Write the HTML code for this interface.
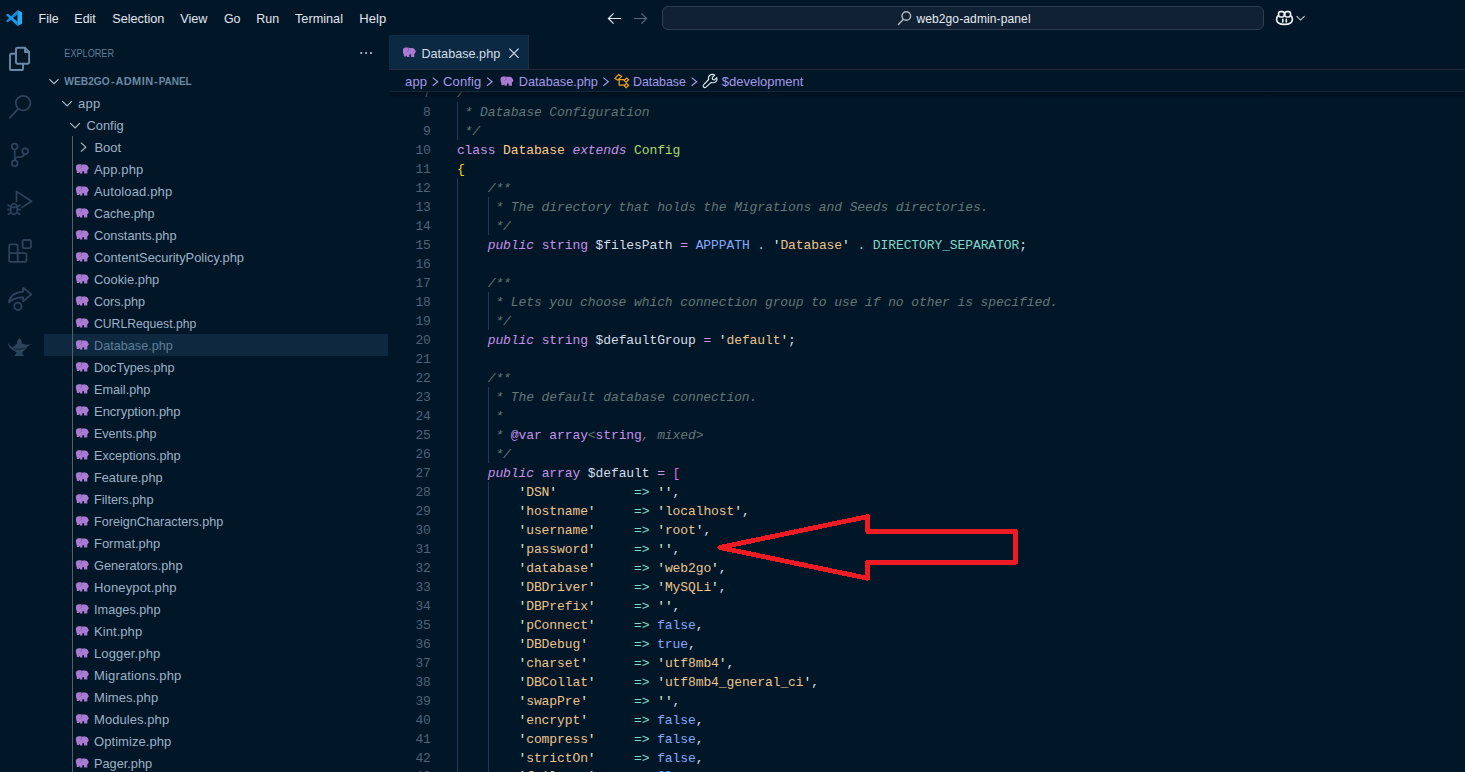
<!DOCTYPE html>
<html lang="en">
<head>
<meta charset="utf-8">
<title>Database.php - web2go-admin-panel - Visual Studio Code</title>
<style>
html,body{margin:0;padding:0;background:#011627;}
body{width:1465px;height:772px;overflow:hidden;position:relative;font-family:'Liberation Sans', sans-serif;}
.t{position:absolute;white-space:pre;transform-origin:0 50%;line-height:20px;height:20px;font-family:'Liberation Sans', sans-serif;}
svg{position:absolute;overflow:visible;}
#cc{position:absolute;left:662px;top:6px;width:600px;height:22px;border:1px solid #2c3e50;border-radius:6px;background:#0f2132;}
#tab{position:absolute;left:389px;top:35px;width:139px;height:35px;background:#0b2942;border-right:1px solid #272b3b;box-sizing:content-box;}
#tabline{position:absolute;left:389px;top:69px;width:1076px;height:1px;background:#262a39;}
#bcline{position:absolute;left:389px;top:91px;width:1076px;height:1px;background:#11283d;}
#eds{position:absolute;left:389px;top:92px;width:1076px;height:6px;background:linear-gradient(rgba(0,6,12,.45),rgba(0,6,12,0));}
#sel{position:absolute;left:44px;top:334px;width:344px;height:22px;background:#0e293f;}
#tg{position:absolute;left:72px;top:136px;width:1px;height:636px;background:#585f66;}
#ed{position:absolute;left:389px;top:92px;width:1076px;height:680px;overflow:hidden;}
.ln,.cl{position:absolute;height:19px;line-height:19px;font-family:'Liberation Mono', monospace;font-size:13px;letter-spacing:-0.1px;white-space:pre;}
.ln{left:0;width:41.8px;text-align:right;color:#4b6479;}
.cl{left:67.9px;color:#d6deeb;}
.g{position:absolute;width:1px;background:#1f385c;}
</style>
</head>
<body>
<div id="cc"></div>
<div id="tab"></div>
<div id="tabline"></div>
<div id="bcline"></div>
<div id="sel"></div>
<div id="tg"></div>
<svg width="1465" height="772" viewBox="0 0 1465 772" style="left:0;top:0" fill="none" stroke-linecap="round" stroke-linejoin="round">
<g stroke="none"><path d="M17.5,10.1 L21.5,12 Q22.1,12.3 22.1,12.9 V23.1 Q22.1,23.7 21.5,24 L17.5,25.9 Z" fill="#29a9f4"/><path d="M17.5,10.1 L6.5,20.5 Q6,21 6.5,21.4 L7.2,22 Q7.7,22.3 8.2,21.9 L17.5,14.4 Z" fill="#1787d6"/><path d="M17.5,25.9 L6.5,15.5 Q6,15 6.5,14.6 L7.2,14 Q7.7,13.7 8.2,14.1 L17.5,21.6 Z" fill="#1b99e6"/></g>
<g stroke="#6a8aa6" stroke-width="1.9"><path d="M17.6,47.8 H25.2 L29.1,51.8 V62 Q29.1,63.8 27.3,63.8 H17.6 Q16,63.8 16,62 V49.5 Q16,47.8 17.6,47.8 Z"/><path d="M25,48 V52 H29"/><path d="M16,53.8 H11.6 Q10,53.8 10,55.4 V68.4 Q10,70 11.6,70 H21.4 Q23,70 23,68.4 V63.8"/></g>
<g stroke="#2b445c" stroke-width="1.8"><circle cx="23.1" cy="103.1" r="7.3"/><path d="M17.8,109.3 L9.9,117.7"/></g>
<g stroke="#2b445c" stroke-width="1.7"><circle cx="14.7" cy="146.6" r="2.9"/><circle cx="25.2" cy="151.2" r="2.9"/><circle cx="14.7" cy="163.2" r="2.9"/><path d="M14.7,149.5 V160.3"/><path d="M24.6,154 Q23.6,157 20.5,157 H18 Q15.3,157 14.9,159.5"/></g>
<g stroke="#2b445c" stroke-width="1.7"><path d="M16.5,201.5 V191.4 L31.6,201.2 L21.6,207.6"/><ellipse cx="14" cy="209" rx="3.4" ry="5.4"/><path d="M10.8,207.3 H17.2"/><path d="M8.2,205.2 L10.6,206.6 M8,209.7 H10.5 M8.3,214.2 L10.7,212.6 M19.8,205.2 L17.4,206.6 M20,209.7 H17.5 M19.7,214.2 L17.3,212.6"/></g>
<g stroke="#2b445c" stroke-width="1.8"><rect x="22.6" y="240" width="8.3" height="8.2" rx="1.6"/><path d="M17.7,253.2 V246 Q17.7,244.4 16.1,244.4 H10.8 Q9.2,244.4 9.2,246 V260.3 Q9.2,261.9 10.8,261.9 H24.9 Q26.5,261.9 26.5,260.3 V254.8 Q26.5,253.2 24.9,253.2 H9.2 M17.7,253.2 V261.9"/></g>
<g stroke="#2b445c" stroke-width="1.8"><circle cx="17.9" cy="306.3" r="3.7"/><path d="M9,302.4 Q10.5,292.5 23.1,291.6 V287.6 L31.4,294.4 L23.1,301.2 V297.4 Q14,297.4 9,302.4 Z"/></g>
<g stroke="none" fill="#2b445c"><path d="M19.4,338 C20.3,339 21.6,340.4 21.7,341.6 L21.8,343.2 C23.5,343.8 25,344.6 26,344.8 C28,344.6 30,344.2 31.9,344 C29,345.2 27,347 25.5,349 C24.3,350.6 22.8,351.6 22.2,352.6 L22.4,354 L23.6,355 V356 H14.8 V355 L16.2,354 L16.4,352.6 C15,351 13,350.4 11.5,349.3 C9.5,347.8 8.2,345.8 8,343.6 C8.6,343.3 8.8,343.6 9,344 C9.8,346 11.6,347 13.4,347.2 C14.6,345.6 16,344 17.1,343.2 L17.1,341.6 C17.3,340.4 18.5,339 19.4,338 Z"/><path d="M14.2,348.9 Q19,350 24.6,348.2" stroke="#011627" stroke-width="0.7" fill="none"/></g>
<g stroke="#b4bec8" stroke-width="1.15" stroke-linecap="butt" stroke-linejoin="miter"><path d="M49.4,79.1 L54,83.6 L58.6,79.1"/><path d="M62.3,101.2 L67.1,105.9 L71.9,101.2"/><path d="M70.3,123.2 L75.1,127.9 L79.9,123.2"/><path d="M80.9,142.7 L85.8,147.2 L80.9,151.7"/></g>
<g fill="#c3cbd4" stroke="none"><circle cx="361.2" cy="53" r="1.05"/><circle cx="366.1" cy="53" r="1.05"/><circle cx="371" cy="53" r="1.05"/></g>
<g stroke="#e2e6f0" stroke-width="1.2" stroke-linecap="butt" stroke-linejoin="miter"><path d="M613.6,13.3 L608.4,18.5 L613.6,23.7 M608.6,18.5 H621"/></g>
<g stroke="#56677a" stroke-width="1.2" stroke-linecap="butt" stroke-linejoin="miter"><path d="M641.4,13.3 L646.6,18.5 L641.4,23.7 M634,18.5 H646.4"/></g>
<g stroke="#b0b8c3" stroke-width="1.45"><circle cx="906.3" cy="16" r="4.3"/><path d="M903.2,19.4 L898.4,24.5"/></g>
<g stroke="#f0f2f8" stroke-width="1.6"><rect x="1278.6" y="11.6" width="5.6" height="5.4" rx="2"/><rect x="1284.9" y="11.6" width="5.6" height="5.4" rx="2"/><path d="M1278.4,15.4 Q1276.6,16.8 1276.6,19.6 Q1276.8,24.3 1284.5,24.4 Q1292.2,24.3 1292.4,19.6 Q1292.4,16.8 1290.6,15.4"/><path d="M1282.8,19.3 V22 M1286.3,19.3 V22"/></g>
<g stroke="#c9d0da" stroke-width="1.1" stroke-linecap="butt" stroke-linejoin="miter"><path d="M1296.6,16.2 L1300.6,20.1 L1304.6,16.2"/></g>
<g stroke="#d6deeb" stroke-width="1.2" stroke-linecap="butt"><path d="M509.4,48.6 L518.6,57.8 M518.6,48.6 L509.4,57.8"/></g>
<g stroke="#a599e9" stroke-width="1.15" stroke-linecap="butt" stroke-linejoin="miter">
<path d="M432.7,77.6 L437.8,81.7 L432.7,85.8"/>
<path d="M487.0,77.6 L492.1,81.7 L487.0,85.8"/>
<path d="M603.3,77.6 L608.4,81.7 L603.3,85.8"/>
<path d="M691.6,77.6 L696.7,81.7 L691.6,85.8"/>
</g>
<g stroke="#ee9d28" stroke-width="1.25" stroke-linejoin="miter"><path d="M618.6,74.6 L621.6,76.4 L617.8,80.2 L614.9,78.4 Z" transform=""/><path d="M619.2,79.2 V85 H624.6 M619.2,79.6 H624.6"/><path d="M626.6,78 L628.6,79.8 L626.2,82.2 L624.2,80.4 Z"/><path d="M626.6,83.4 L628.6,85.2 L626.2,87.6 L624.2,85.8 Z"/></g>
<g stroke="#e6ebf3" stroke-width="1.2" transform="translate(710 81.2) scale(0.94) translate(-710 -81.2)"><path d="M715,74.6 L712.3,77.3 L712.6,79.4 L714.8,79.8 L717.2,77.3 C717.8,79.5 716.8,81.8 714.6,82.6 C713.4,83 712.3,82.9 711.3,82.5 L705.7,87.5 C704.9,88.1 703.7,88 703.1,87.2 C702.5,86.4 702.6,85.4 703.3,84.8 L708.6,79.4 C708.1,77.8 708.4,76 709.8,74.9 C711.4,73.7 713.4,73.7 715,74.6 Z"/></g>
<path d="M402.90,50.50 Q402.90,47.80 405.80,47.60 L407.80,47.60 Q408.70,48.30 409.60,47.90 L412.40,47.90 Q414.60,48.20 415.10,50.10 L415.90,51.70 L415.10,52.90 L414.30,53.90 L414.30,57.00 L411.10,57.00 L411.10,54.60 L409.30,54.60 L409.30,57.00 L406.90,57.00 L406.90,55.70 L406.10,55.70 L406.10,56.50 L403.90,56.50 L403.70,54.30 Q402.80,52.90 402.90,50.50 Z" fill="#ab7bd2" stroke="none"/><path d="M408.70,48.30 Q409.20,50.90 407.20,51.90" fill="none" stroke="#7d55b8" stroke-width="0.8"/>
<path d="M500.50,79.30 Q500.50,76.60 503.40,76.40 L505.40,76.40 Q506.30,77.10 507.20,76.70 L510.00,76.70 Q512.20,77.00 512.70,78.90 L513.50,80.50 L512.70,81.70 L511.90,82.70 L511.90,85.80 L508.70,85.80 L508.70,83.40 L506.90,83.40 L506.90,85.80 L504.50,85.80 L504.50,84.50 L503.70,84.50 L503.70,85.30 L501.50,85.30 L501.30,83.10 Q500.40,81.70 500.50,79.30 Z" fill="#ab7bd2" stroke="none"/><path d="M506.30,77.10 Q506.80,79.70 504.80,80.70" fill="none" stroke="#7d55b8" stroke-width="0.8"/>
</svg>
<svg width="1465" height="772" viewBox="0 0 1465 772" style="left:0;top:0">
<path d="M75.90,167.10 Q75.90,164.40 78.80,164.20 L80.80,164.20 Q81.70,164.90 82.60,164.50 L85.40,164.50 Q87.60,164.80 88.10,166.70 L88.90,168.30 L88.10,169.50 L87.30,170.50 L87.30,173.60 L84.10,173.60 L84.10,171.20 L82.30,171.20 L82.30,173.60 L79.90,173.60 L79.90,172.30 L79.10,172.30 L79.10,173.10 L76.90,173.10 L76.70,170.90 Q75.80,169.50 75.90,167.10 Z" fill="#ab7bd2"/><path d="M81.70,164.90 Q82.20,167.50 80.20,168.50" fill="none" stroke="#7d55b8" stroke-width="0.8"/>
<path d="M75.90,189.10 Q75.90,186.40 78.80,186.20 L80.80,186.20 Q81.70,186.90 82.60,186.50 L85.40,186.50 Q87.60,186.80 88.10,188.70 L88.90,190.30 L88.10,191.50 L87.30,192.50 L87.30,195.60 L84.10,195.60 L84.10,193.20 L82.30,193.20 L82.30,195.60 L79.90,195.60 L79.90,194.30 L79.10,194.30 L79.10,195.10 L76.90,195.10 L76.70,192.90 Q75.80,191.50 75.90,189.10 Z" fill="#ab7bd2"/><path d="M81.70,186.90 Q82.20,189.50 80.20,190.50" fill="none" stroke="#7d55b8" stroke-width="0.8"/>
<path d="M75.90,211.10 Q75.90,208.40 78.80,208.20 L80.80,208.20 Q81.70,208.90 82.60,208.50 L85.40,208.50 Q87.60,208.80 88.10,210.70 L88.90,212.30 L88.10,213.50 L87.30,214.50 L87.30,217.60 L84.10,217.60 L84.10,215.20 L82.30,215.20 L82.30,217.60 L79.90,217.60 L79.90,216.30 L79.10,216.30 L79.10,217.10 L76.90,217.10 L76.70,214.90 Q75.80,213.50 75.90,211.10 Z" fill="#ab7bd2"/><path d="M81.70,208.90 Q82.20,211.50 80.20,212.50" fill="none" stroke="#7d55b8" stroke-width="0.8"/>
<path d="M75.90,233.10 Q75.90,230.40 78.80,230.20 L80.80,230.20 Q81.70,230.90 82.60,230.50 L85.40,230.50 Q87.60,230.80 88.10,232.70 L88.90,234.30 L88.10,235.50 L87.30,236.50 L87.30,239.60 L84.10,239.60 L84.10,237.20 L82.30,237.20 L82.30,239.60 L79.90,239.60 L79.90,238.30 L79.10,238.30 L79.10,239.10 L76.90,239.10 L76.70,236.90 Q75.80,235.50 75.90,233.10 Z" fill="#ab7bd2"/><path d="M81.70,230.90 Q82.20,233.50 80.20,234.50" fill="none" stroke="#7d55b8" stroke-width="0.8"/>
<path d="M75.90,255.10 Q75.90,252.40 78.80,252.20 L80.80,252.20 Q81.70,252.90 82.60,252.50 L85.40,252.50 Q87.60,252.80 88.10,254.70 L88.90,256.30 L88.10,257.50 L87.30,258.50 L87.30,261.60 L84.10,261.60 L84.10,259.20 L82.30,259.20 L82.30,261.60 L79.90,261.60 L79.90,260.30 L79.10,260.30 L79.10,261.10 L76.90,261.10 L76.70,258.90 Q75.80,257.50 75.90,255.10 Z" fill="#ab7bd2"/><path d="M81.70,252.90 Q82.20,255.50 80.20,256.50" fill="none" stroke="#7d55b8" stroke-width="0.8"/>
<path d="M75.90,277.10 Q75.90,274.40 78.80,274.20 L80.80,274.20 Q81.70,274.90 82.60,274.50 L85.40,274.50 Q87.60,274.80 88.10,276.70 L88.90,278.30 L88.10,279.50 L87.30,280.50 L87.30,283.60 L84.10,283.60 L84.10,281.20 L82.30,281.20 L82.30,283.60 L79.90,283.60 L79.90,282.30 L79.10,282.30 L79.10,283.10 L76.90,283.10 L76.70,280.90 Q75.80,279.50 75.90,277.10 Z" fill="#ab7bd2"/><path d="M81.70,274.90 Q82.20,277.50 80.20,278.50" fill="none" stroke="#7d55b8" stroke-width="0.8"/>
<path d="M75.90,299.10 Q75.90,296.40 78.80,296.20 L80.80,296.20 Q81.70,296.90 82.60,296.50 L85.40,296.50 Q87.60,296.80 88.10,298.70 L88.90,300.30 L88.10,301.50 L87.30,302.50 L87.30,305.60 L84.10,305.60 L84.10,303.20 L82.30,303.20 L82.30,305.60 L79.90,305.60 L79.90,304.30 L79.10,304.30 L79.10,305.10 L76.90,305.10 L76.70,302.90 Q75.80,301.50 75.90,299.10 Z" fill="#ab7bd2"/><path d="M81.70,296.90 Q82.20,299.50 80.20,300.50" fill="none" stroke="#7d55b8" stroke-width="0.8"/>
<path d="M75.90,321.10 Q75.90,318.40 78.80,318.20 L80.80,318.20 Q81.70,318.90 82.60,318.50 L85.40,318.50 Q87.60,318.80 88.10,320.70 L88.90,322.30 L88.10,323.50 L87.30,324.50 L87.30,327.60 L84.10,327.60 L84.10,325.20 L82.30,325.20 L82.30,327.60 L79.90,327.60 L79.90,326.30 L79.10,326.30 L79.10,327.10 L76.90,327.10 L76.70,324.90 Q75.80,323.50 75.90,321.10 Z" fill="#ab7bd2"/><path d="M81.70,318.90 Q82.20,321.50 80.20,322.50" fill="none" stroke="#7d55b8" stroke-width="0.8"/>
<path d="M75.90,343.10 Q75.90,340.40 78.80,340.20 L80.80,340.20 Q81.70,340.90 82.60,340.50 L85.40,340.50 Q87.60,340.80 88.10,342.70 L88.90,344.30 L88.10,345.50 L87.30,346.50 L87.30,349.60 L84.10,349.60 L84.10,347.20 L82.30,347.20 L82.30,349.60 L79.90,349.60 L79.90,348.30 L79.10,348.30 L79.10,349.10 L76.90,349.10 L76.70,346.90 Q75.80,345.50 75.90,343.10 Z" fill="#ab7bd2"/><path d="M81.70,340.90 Q82.20,343.50 80.20,344.50" fill="none" stroke="#7d55b8" stroke-width="0.8"/>
<path d="M75.90,365.10 Q75.90,362.40 78.80,362.20 L80.80,362.20 Q81.70,362.90 82.60,362.50 L85.40,362.50 Q87.60,362.80 88.10,364.70 L88.90,366.30 L88.10,367.50 L87.30,368.50 L87.30,371.60 L84.10,371.60 L84.10,369.20 L82.30,369.20 L82.30,371.60 L79.90,371.60 L79.90,370.30 L79.10,370.30 L79.10,371.10 L76.90,371.10 L76.70,368.90 Q75.80,367.50 75.90,365.10 Z" fill="#ab7bd2"/><path d="M81.70,362.90 Q82.20,365.50 80.20,366.50" fill="none" stroke="#7d55b8" stroke-width="0.8"/>
<path d="M75.90,387.10 Q75.90,384.40 78.80,384.20 L80.80,384.20 Q81.70,384.90 82.60,384.50 L85.40,384.50 Q87.60,384.80 88.10,386.70 L88.90,388.30 L88.10,389.50 L87.30,390.50 L87.30,393.60 L84.10,393.60 L84.10,391.20 L82.30,391.20 L82.30,393.60 L79.90,393.60 L79.90,392.30 L79.10,392.30 L79.10,393.10 L76.90,393.10 L76.70,390.90 Q75.80,389.50 75.90,387.10 Z" fill="#ab7bd2"/><path d="M81.70,384.90 Q82.20,387.50 80.20,388.50" fill="none" stroke="#7d55b8" stroke-width="0.8"/>
<path d="M75.90,409.10 Q75.90,406.40 78.80,406.20 L80.80,406.20 Q81.70,406.90 82.60,406.50 L85.40,406.50 Q87.60,406.80 88.10,408.70 L88.90,410.30 L88.10,411.50 L87.30,412.50 L87.30,415.60 L84.10,415.60 L84.10,413.20 L82.30,413.20 L82.30,415.60 L79.90,415.60 L79.90,414.30 L79.10,414.30 L79.10,415.10 L76.90,415.10 L76.70,412.90 Q75.80,411.50 75.90,409.10 Z" fill="#ab7bd2"/><path d="M81.70,406.90 Q82.20,409.50 80.20,410.50" fill="none" stroke="#7d55b8" stroke-width="0.8"/>
<path d="M75.90,431.10 Q75.90,428.40 78.80,428.20 L80.80,428.20 Q81.70,428.90 82.60,428.50 L85.40,428.50 Q87.60,428.80 88.10,430.70 L88.90,432.30 L88.10,433.50 L87.30,434.50 L87.30,437.60 L84.10,437.60 L84.10,435.20 L82.30,435.20 L82.30,437.60 L79.90,437.60 L79.90,436.30 L79.10,436.30 L79.10,437.10 L76.90,437.10 L76.70,434.90 Q75.80,433.50 75.90,431.10 Z" fill="#ab7bd2"/><path d="M81.70,428.90 Q82.20,431.50 80.20,432.50" fill="none" stroke="#7d55b8" stroke-width="0.8"/>
<path d="M75.90,453.10 Q75.90,450.40 78.80,450.20 L80.80,450.20 Q81.70,450.90 82.60,450.50 L85.40,450.50 Q87.60,450.80 88.10,452.70 L88.90,454.30 L88.10,455.50 L87.30,456.50 L87.30,459.60 L84.10,459.60 L84.10,457.20 L82.30,457.20 L82.30,459.60 L79.90,459.60 L79.90,458.30 L79.10,458.30 L79.10,459.10 L76.90,459.10 L76.70,456.90 Q75.80,455.50 75.90,453.10 Z" fill="#ab7bd2"/><path d="M81.70,450.90 Q82.20,453.50 80.20,454.50" fill="none" stroke="#7d55b8" stroke-width="0.8"/>
<path d="M75.90,475.10 Q75.90,472.40 78.80,472.20 L80.80,472.20 Q81.70,472.90 82.60,472.50 L85.40,472.50 Q87.60,472.80 88.10,474.70 L88.90,476.30 L88.10,477.50 L87.30,478.50 L87.30,481.60 L84.10,481.60 L84.10,479.20 L82.30,479.20 L82.30,481.60 L79.90,481.60 L79.90,480.30 L79.10,480.30 L79.10,481.10 L76.90,481.10 L76.70,478.90 Q75.80,477.50 75.90,475.10 Z" fill="#ab7bd2"/><path d="M81.70,472.90 Q82.20,475.50 80.20,476.50" fill="none" stroke="#7d55b8" stroke-width="0.8"/>
<path d="M75.90,497.10 Q75.90,494.40 78.80,494.20 L80.80,494.20 Q81.70,494.90 82.60,494.50 L85.40,494.50 Q87.60,494.80 88.10,496.70 L88.90,498.30 L88.10,499.50 L87.30,500.50 L87.30,503.60 L84.10,503.60 L84.10,501.20 L82.30,501.20 L82.30,503.60 L79.90,503.60 L79.90,502.30 L79.10,502.30 L79.10,503.10 L76.90,503.10 L76.70,500.90 Q75.80,499.50 75.90,497.10 Z" fill="#ab7bd2"/><path d="M81.70,494.90 Q82.20,497.50 80.20,498.50" fill="none" stroke="#7d55b8" stroke-width="0.8"/>
<path d="M75.90,519.10 Q75.90,516.40 78.80,516.20 L80.80,516.20 Q81.70,516.90 82.60,516.50 L85.40,516.50 Q87.60,516.80 88.10,518.70 L88.90,520.30 L88.10,521.50 L87.30,522.50 L87.30,525.60 L84.10,525.60 L84.10,523.20 L82.30,523.20 L82.30,525.60 L79.90,525.60 L79.90,524.30 L79.10,524.30 L79.10,525.10 L76.90,525.10 L76.70,522.90 Q75.80,521.50 75.90,519.10 Z" fill="#ab7bd2"/><path d="M81.70,516.90 Q82.20,519.50 80.20,520.50" fill="none" stroke="#7d55b8" stroke-width="0.8"/>
<path d="M75.90,541.10 Q75.90,538.40 78.80,538.20 L80.80,538.20 Q81.70,538.90 82.60,538.50 L85.40,538.50 Q87.60,538.80 88.10,540.70 L88.90,542.30 L88.10,543.50 L87.30,544.50 L87.30,547.60 L84.10,547.60 L84.10,545.20 L82.30,545.20 L82.30,547.60 L79.90,547.60 L79.90,546.30 L79.10,546.30 L79.10,547.10 L76.90,547.10 L76.70,544.90 Q75.80,543.50 75.90,541.10 Z" fill="#ab7bd2"/><path d="M81.70,538.90 Q82.20,541.50 80.20,542.50" fill="none" stroke="#7d55b8" stroke-width="0.8"/>
<path d="M75.90,563.10 Q75.90,560.40 78.80,560.20 L80.80,560.20 Q81.70,560.90 82.60,560.50 L85.40,560.50 Q87.60,560.80 88.10,562.70 L88.90,564.30 L88.10,565.50 L87.30,566.50 L87.30,569.60 L84.10,569.60 L84.10,567.20 L82.30,567.20 L82.30,569.60 L79.90,569.60 L79.90,568.30 L79.10,568.30 L79.10,569.10 L76.90,569.10 L76.70,566.90 Q75.80,565.50 75.90,563.10 Z" fill="#ab7bd2"/><path d="M81.70,560.90 Q82.20,563.50 80.20,564.50" fill="none" stroke="#7d55b8" stroke-width="0.8"/>
<path d="M75.90,585.10 Q75.90,582.40 78.80,582.20 L80.80,582.20 Q81.70,582.90 82.60,582.50 L85.40,582.50 Q87.60,582.80 88.10,584.70 L88.90,586.30 L88.10,587.50 L87.30,588.50 L87.30,591.60 L84.10,591.60 L84.10,589.20 L82.30,589.20 L82.30,591.60 L79.90,591.60 L79.90,590.30 L79.10,590.30 L79.10,591.10 L76.90,591.10 L76.70,588.90 Q75.80,587.50 75.90,585.10 Z" fill="#ab7bd2"/><path d="M81.70,582.90 Q82.20,585.50 80.20,586.50" fill="none" stroke="#7d55b8" stroke-width="0.8"/>
<path d="M75.90,607.10 Q75.90,604.40 78.80,604.20 L80.80,604.20 Q81.70,604.90 82.60,604.50 L85.40,604.50 Q87.60,604.80 88.10,606.70 L88.90,608.30 L88.10,609.50 L87.30,610.50 L87.30,613.60 L84.10,613.60 L84.10,611.20 L82.30,611.20 L82.30,613.60 L79.90,613.60 L79.90,612.30 L79.10,612.30 L79.10,613.10 L76.90,613.10 L76.70,610.90 Q75.80,609.50 75.90,607.10 Z" fill="#ab7bd2"/><path d="M81.70,604.90 Q82.20,607.50 80.20,608.50" fill="none" stroke="#7d55b8" stroke-width="0.8"/>
<path d="M75.90,629.10 Q75.90,626.40 78.80,626.20 L80.80,626.20 Q81.70,626.90 82.60,626.50 L85.40,626.50 Q87.60,626.80 88.10,628.70 L88.90,630.30 L88.10,631.50 L87.30,632.50 L87.30,635.60 L84.10,635.60 L84.10,633.20 L82.30,633.20 L82.30,635.60 L79.90,635.60 L79.90,634.30 L79.10,634.30 L79.10,635.10 L76.90,635.10 L76.70,632.90 Q75.80,631.50 75.90,629.10 Z" fill="#ab7bd2"/><path d="M81.70,626.90 Q82.20,629.50 80.20,630.50" fill="none" stroke="#7d55b8" stroke-width="0.8"/>
<path d="M75.90,651.10 Q75.90,648.40 78.80,648.20 L80.80,648.20 Q81.70,648.90 82.60,648.50 L85.40,648.50 Q87.60,648.80 88.10,650.70 L88.90,652.30 L88.10,653.50 L87.30,654.50 L87.30,657.60 L84.10,657.60 L84.10,655.20 L82.30,655.20 L82.30,657.60 L79.90,657.60 L79.90,656.30 L79.10,656.30 L79.10,657.10 L76.90,657.10 L76.70,654.90 Q75.80,653.50 75.90,651.10 Z" fill="#ab7bd2"/><path d="M81.70,648.90 Q82.20,651.50 80.20,652.50" fill="none" stroke="#7d55b8" stroke-width="0.8"/>
<path d="M75.90,673.10 Q75.90,670.40 78.80,670.20 L80.80,670.20 Q81.70,670.90 82.60,670.50 L85.40,670.50 Q87.60,670.80 88.10,672.70 L88.90,674.30 L88.10,675.50 L87.30,676.50 L87.30,679.60 L84.10,679.60 L84.10,677.20 L82.30,677.20 L82.30,679.60 L79.90,679.60 L79.90,678.30 L79.10,678.30 L79.10,679.10 L76.90,679.10 L76.70,676.90 Q75.80,675.50 75.90,673.10 Z" fill="#ab7bd2"/><path d="M81.70,670.90 Q82.20,673.50 80.20,674.50" fill="none" stroke="#7d55b8" stroke-width="0.8"/>
<path d="M75.90,695.10 Q75.90,692.40 78.80,692.20 L80.80,692.20 Q81.70,692.90 82.60,692.50 L85.40,692.50 Q87.60,692.80 88.10,694.70 L88.90,696.30 L88.10,697.50 L87.30,698.50 L87.30,701.60 L84.10,701.60 L84.10,699.20 L82.30,699.20 L82.30,701.60 L79.90,701.60 L79.90,700.30 L79.10,700.30 L79.10,701.10 L76.90,701.10 L76.70,698.90 Q75.80,697.50 75.90,695.10 Z" fill="#ab7bd2"/><path d="M81.70,692.90 Q82.20,695.50 80.20,696.50" fill="none" stroke="#7d55b8" stroke-width="0.8"/>
<path d="M75.90,717.10 Q75.90,714.40 78.80,714.20 L80.80,714.20 Q81.70,714.90 82.60,714.50 L85.40,714.50 Q87.60,714.80 88.10,716.70 L88.90,718.30 L88.10,719.50 L87.30,720.50 L87.30,723.60 L84.10,723.60 L84.10,721.20 L82.30,721.20 L82.30,723.60 L79.90,723.60 L79.90,722.30 L79.10,722.30 L79.10,723.10 L76.90,723.10 L76.70,720.90 Q75.80,719.50 75.90,717.10 Z" fill="#ab7bd2"/><path d="M81.70,714.90 Q82.20,717.50 80.20,718.50" fill="none" stroke="#7d55b8" stroke-width="0.8"/>
<path d="M75.90,739.10 Q75.90,736.40 78.80,736.20 L80.80,736.20 Q81.70,736.90 82.60,736.50 L85.40,736.50 Q87.60,736.80 88.10,738.70 L88.90,740.30 L88.10,741.50 L87.30,742.50 L87.30,745.60 L84.10,745.60 L84.10,743.20 L82.30,743.20 L82.30,745.60 L79.90,745.60 L79.90,744.30 L79.10,744.30 L79.10,745.10 L76.90,745.10 L76.70,742.90 Q75.80,741.50 75.90,739.10 Z" fill="#ab7bd2"/><path d="M81.70,736.90 Q82.20,739.50 80.20,740.50" fill="none" stroke="#7d55b8" stroke-width="0.8"/>
<path d="M75.90,761.10 Q75.90,758.40 78.80,758.20 L80.80,758.20 Q81.70,758.90 82.60,758.50 L85.40,758.50 Q87.60,758.80 88.10,760.70 L88.90,762.30 L88.10,763.50 L87.30,764.50 L87.30,767.60 L84.10,767.60 L84.10,765.20 L82.30,765.20 L82.30,767.60 L79.90,767.60 L79.90,766.30 L79.10,766.30 L79.10,767.10 L76.90,767.10 L76.70,764.90 Q75.80,763.50 75.90,761.10 Z" fill="#ab7bd2"/><path d="M81.70,758.90 Q82.20,761.50 80.20,762.50" fill="none" stroke="#7d55b8" stroke-width="0.8"/>
</svg>
<span class="t" style="left:38px;top:8.50px;font-size:13px;color:#e2e6f0;transform:translateX(0.54px) scaleX(0.9636)">File</span>
<span class="t" style="left:74px;top:8.50px;font-size:13px;color:#e2e6f0;transform:translateX(0.34px) scaleX(0.9592)">Edit</span>
<span class="t" style="left:112px;top:8.50px;font-size:13px;color:#e2e6f0;transform:translateX(0.20px) scaleX(0.9765)">Selection</span>
<span class="t" style="left:180px;top:8.50px;font-size:13px;color:#e2e6f0;transform:translateX(0.20px) scaleX(0.9771)">View</span>
<span class="t" style="left:223px;top:8.50px;font-size:13px;color:#e2e6f0;transform:translateX(0.90px) scaleX(0.9584)">Go</span>
<span class="t" style="left:256px;top:8.50px;font-size:13px;color:#e2e6f0;transform:translateX(0.35px) scaleX(0.9550)">Run</span>
<span class="t" style="left:295px;top:8.50px;font-size:13px;color:#e2e6f0;transform:translateX(0.00px) scaleX(0.9769)">Terminal</span>
<span class="t" style="left:359.30px;top:8.50px;font-size:13px;color:#e2e6f0;letter-spacing:0.031px">Help</span>
<span class="t" style="left:916.40px;top:9.00px;font-size:12px;color:#e8ebf3;letter-spacing:0.123px">web2go-admin-panel</span>
<span class="t" style="left:421px;top:43.90px;font-size:13px;color:#d2dee7;transform:translateX(0.43px) scaleX(0.9734)">Database.php</span>
<span class="t" style="left:405.00px;top:71.50px;font-size:13px;color:#a599e9;letter-spacing:0.170px">app</span>
<span class="t" style="left:443.00px;top:71.50px;font-size:13px;color:#a599e9;letter-spacing:0.130px">Config</span>
<span class="t" style="left:518px;top:71.50px;font-size:13px;color:#a599e9;transform:translateX(0.82px) scaleX(0.9771)">Database.php</span>
<span class="t" style="left:632px;top:71.50px;font-size:13px;color:#a599e9;transform:translateX(0.95px) scaleX(0.9519)">Database</span>
<span class="t" style="left:721.70px;top:71.50px;font-size:13px;color:#a599e9;letter-spacing:0.004px">$development</span>
<span class="t" style="left:64px;top:42.90px;font-size:11px;color:#5f7e97;transform:translateX(0.30px) scaleX(0.8305)">EXPLORER</span>
<span class="t" style="left:64px;top:71.40px;font-size:11px;color:#6a89a3;transform:translateX(0.30px) scaleX(0.9303);font-weight:700">WEB2GO</span>
<span class="t" style="left:111px;top:70.80px;font-size:11px;color:#6a89a3;transform:translateX(0.00px) scaleX(1.0250);font-weight:700">-</span>
<span class="t" style="left:115.40px;top:71.40px;font-size:11px;color:#6a89a3;letter-spacing:0.423px;font-weight:700">ADMIN</span>
<span class="t" style="left:154px;top:70.80px;font-size:11px;color:#6a89a3;transform:translateX(0.10px) scaleX(1.0250);font-weight:700">-</span>
<span class="t" style="left:158px;top:71.40px;font-size:11px;color:#6a89a3;transform:translateX(0.70px) scaleX(0.9035);font-weight:700">PANEL</span>
<span class="t" style="left:78.00px;top:93.90px;font-size:13px;color:#9db2c6;letter-spacing:0.270px">app</span>
<span class="t" style="left:86px;top:115.90px;font-size:13px;color:#9db2c6;transform:translateX(0.40px) scaleX(0.9934)">Config</span>
<span class="t" style="left:94.40px;top:137.90px;font-size:13px;color:#9db2c6;letter-spacing:0.023px">Boot</span>
<span class="t" style="left:94.00px;top:159.90px;font-size:13px;color:#9db2c6;letter-spacing:0.150px">App.php</span>
<span class="t" style="left:94.00px;top:181.90px;font-size:13px;color:#9db2c6;letter-spacing:0.146px">Autoload.php</span>
<span class="t" style="left:94px;top:203.90px;font-size:13px;color:#9db2c6;transform:translateX(0.00px) scaleX(0.9625)">Cache.php</span>
<span class="t" style="left:94px;top:225.90px;font-size:13px;color:#9db2c6;transform:translateX(0.00px) scaleX(0.9844)">Constants.php</span>
<span class="t" style="left:94px;top:247.90px;font-size:13px;color:#9db2c6;transform:translateX(0.00px) scaleX(0.9902)">ContentSecurityPolicy.php</span>
<span class="t" style="left:94px;top:269.90px;font-size:13px;color:#9db2c6;transform:translateX(0.00px) scaleX(0.9918)">Cookie.php</span>
<span class="t" style="left:94px;top:291.90px;font-size:13px;color:#9db2c6;transform:translateX(0.00px) scaleX(0.9692)">Cors.php</span>
<span class="t" style="left:94px;top:313.90px;font-size:13px;color:#9db2c6;transform:translateX(0.00px) scaleX(0.9377)">CURLRequest.php</span>
<span class="t" style="left:94px;top:335.90px;font-size:13px;color:#5f7e97;transform:translateX(0.00px) scaleX(0.9737)">Database.php</span>
<span class="t" style="left:94px;top:357.90px;font-size:13px;color:#9db2c6;transform:translateX(0.00px) scaleX(0.9702)">DocTypes.php</span>
<span class="t" style="left:94px;top:379.90px;font-size:13px;color:#9db2c6;transform:translateX(0.00px) scaleX(0.9743)">Email.php</span>
<span class="t" style="left:94px;top:401.90px;font-size:13px;color:#9db2c6;transform:translateX(0.00px) scaleX(0.9978)">Encryption.php</span>
<span class="t" style="left:94px;top:423.90px;font-size:13px;color:#9db2c6;transform:translateX(0.00px) scaleX(0.9612)">Events.php</span>
<span class="t" style="left:94px;top:445.90px;font-size:13px;color:#9db2c6;transform:translateX(0.00px) scaleX(0.9734)">Exceptions.php</span>
<span class="t" style="left:94px;top:467.90px;font-size:13px;color:#9db2c6;transform:translateX(0.00px) scaleX(0.9775)">Feature.php</span>
<span class="t" style="left:94px;top:489.90px;font-size:13px;color:#9db2c6;transform:translateX(0.00px) scaleX(0.9808)">Filters.php</span>
<span class="t" style="left:94px;top:511.90px;font-size:13px;color:#9db2c6;transform:translateX(0.00px) scaleX(0.9727)">ForeignCharacters.php</span>
<span class="t" style="left:94px;top:533.90px;font-size:13px;color:#9db2c6;transform:translateX(0.00px) scaleX(0.9963)">Format.php</span>
<span class="t" style="left:94px;top:555.90px;font-size:13px;color:#9db2c6;transform:translateX(0.00px) scaleX(0.9800)">Generators.php</span>
<span class="t" style="left:94.00px;top:577.90px;font-size:13px;color:#9db2c6;letter-spacing:0.143px">Honeypot.php</span>
<span class="t" style="left:94px;top:599.90px;font-size:13px;color:#9db2c6;transform:translateX(0.00px) scaleX(0.9793)">Images.php</span>
<span class="t" style="left:94.00px;top:621.90px;font-size:13px;color:#9db2c6;letter-spacing:0.061px">Kint.php</span>
<span class="t" style="left:94.00px;top:643.90px;font-size:13px;color:#9db2c6;letter-spacing:0.130px">Logger.php</span>
<span class="t" style="left:94.00px;top:665.90px;font-size:13px;color:#9db2c6;letter-spacing:0.159px">Migrations.php</span>
<span class="t" style="left:94.00px;top:687.90px;font-size:13px;color:#9db2c6;letter-spacing:0.069px">Mimes.php</span>
<span class="t" style="left:94.00px;top:709.90px;font-size:13px;color:#9db2c6;letter-spacing:0.069px">Modules.php</span>
<span class="t" style="left:94.00px;top:731.90px;font-size:13px;color:#9db2c6;letter-spacing:0.067px">Optimize.php</span>
<span class="t" style="left:94px;top:753.90px;font-size:13px;color:#9db2c6;transform:translateX(0.00px) scaleX(0.9806)">Pager.php</span>
<div id="ed">
<i class="g" style="left:68px;top:10px;height:38px"></i>
<i class="g" style="left:68px;top:86px;height:608px"></i>
<i class="g" style="left:99px;top:105px;height:38px"></i>
<i class="g" style="left:99px;top:200px;height:38px"></i>
<i class="g" style="left:99px;top:295px;height:76px"></i>
<i class="g" style="left:99px;top:390px;height:304px"></i>
<div class="ln" style="top:-8px">7</div><div class="cl" style="top:-8px"><span style="color:#637777;font-style:italic">/**</span></div>
<div class="ln" style="top:11px">8</div><div class="cl" style="top:11px"><span style="color:#637777;font-style:italic"> * Database Configuration</span></div>
<div class="ln" style="top:30px">9</div><div class="cl" style="top:30px"><span style="color:#637777;font-style:italic"> */</span></div>
<div class="ln" style="top:49px">10</div><div class="cl" style="top:49px"><span style="color:#c792ea">class</span> <span style="color:#ffcb8b">Database</span> <span style="color:#c792ea;font-style:italic">extends</span> <span style="color:#addb67">Config</span></div>
<div class="ln" style="top:68px">11</div><div class="cl" style="top:68px"><span style="color:#ffd700">{</span></div>
<div class="ln" style="top:87px">12</div><div class="cl" style="top:87px">    <span style="color:#637777;font-style:italic">/**</span></div>
<div class="ln" style="top:106px">13</div><div class="cl" style="top:106px">    <span style="color:#637777;font-style:italic"> * The directory that holds the Migrations and Seeds directories.</span></div>
<div class="ln" style="top:125px">14</div><div class="cl" style="top:125px">    <span style="color:#637777;font-style:italic"> */</span></div>
<div class="ln" style="top:144px">15</div><div class="cl" style="top:144px">    <span style="color:#c792ea;font-style:italic">public</span> <span style="color:#c792ea">string</span> <span style="color:#d6deeb">$filesPath</span> <span style="color:#c792ea">=</span> <span style="color:#82aaff">APPPATH</span> <span style="color:#7fdbca">.</span> <span style="color:#d9f5dd">&#x27;</span><span style="color:#ecc48d">Database</span><span style="color:#d9f5dd">&#x27;</span> <span style="color:#7fdbca">.</span> <span style="color:#7fdbca">DIRECTORY_SEPARATOR</span><span style="color:#d6deeb">;</span></div>
<div class="ln" style="top:163px">16</div><div class="cl" style="top:163px"></div>
<div class="ln" style="top:182px">17</div><div class="cl" style="top:182px">    <span style="color:#637777;font-style:italic">/**</span></div>
<div class="ln" style="top:201px">18</div><div class="cl" style="top:201px">    <span style="color:#637777;font-style:italic"> * Lets you choose which connection group to use if no other is specified.</span></div>
<div class="ln" style="top:220px">19</div><div class="cl" style="top:220px">    <span style="color:#637777;font-style:italic"> */</span></div>
<div class="ln" style="top:239px">20</div><div class="cl" style="top:239px">    <span style="color:#c792ea;font-style:italic">public</span> <span style="color:#c792ea">string</span> <span style="color:#d6deeb">$defaultGroup</span> <span style="color:#c792ea">=</span> <span style="color:#d9f5dd">&#x27;</span><span style="color:#ecc48d">default</span><span style="color:#d9f5dd">&#x27;</span><span style="color:#d6deeb">;</span></div>
<div class="ln" style="top:258px">21</div><div class="cl" style="top:258px"></div>
<div class="ln" style="top:277px">22</div><div class="cl" style="top:277px">    <span style="color:#637777;font-style:italic">/**</span></div>
<div class="ln" style="top:296px">23</div><div class="cl" style="top:296px">    <span style="color:#637777;font-style:italic"> * The default database connection.</span></div>
<div class="ln" style="top:315px">24</div><div class="cl" style="top:315px">    <span style="color:#637777;font-style:italic"> *</span></div>
<div class="ln" style="top:334px">25</div><div class="cl" style="top:334px">    <span style="color:#637777;font-style:italic"> * </span><span style="color:#c792ea">@var</span> <span style="color:#c792ea">array</span><span style="color:#637777">&lt;</span><span style="color:#c792ea">string</span><span style="color:#637777;font-style:italic">, mixed&gt;</span></div>
<div class="ln" style="top:353px">26</div><div class="cl" style="top:353px">    <span style="color:#637777;font-style:italic"> */</span></div>
<div class="ln" style="top:372px">27</div><div class="cl" style="top:372px">    <span style="color:#c792ea;font-style:italic">public</span> <span style="color:#c792ea">array</span> <span style="color:#d6deeb">$default</span> <span style="color:#c792ea">=</span> <span style="color:#da70d6">[</span></div>
<div class="ln" style="top:391px">28</div><div class="cl" style="top:391px">        <span style="color:#d9f5dd">&#x27;</span><span style="color:#ecc48d">DSN</span><span style="color:#d9f5dd">&#x27;</span>          <span style="color:#7fdbca">=&gt;</span> <span style="color:#d9f5dd">&#x27;</span><span style="color:#ecc48d"></span><span style="color:#d9f5dd">&#x27;</span><span style="color:#d6deeb">,</span></div>
<div class="ln" style="top:410px">29</div><div class="cl" style="top:410px">        <span style="color:#d9f5dd">&#x27;</span><span style="color:#ecc48d">hostname</span><span style="color:#d9f5dd">&#x27;</span>     <span style="color:#7fdbca">=&gt;</span> <span style="color:#d9f5dd">&#x27;</span><span style="color:#ecc48d">localhost</span><span style="color:#d9f5dd">&#x27;</span><span style="color:#d6deeb">,</span></div>
<div class="ln" style="top:429px">30</div><div class="cl" style="top:429px">        <span style="color:#d9f5dd">&#x27;</span><span style="color:#ecc48d">username</span><span style="color:#d9f5dd">&#x27;</span>     <span style="color:#7fdbca">=&gt;</span> <span style="color:#d9f5dd">&#x27;</span><span style="color:#ecc48d">root</span><span style="color:#d9f5dd">&#x27;</span><span style="color:#d6deeb">,</span></div>
<div class="ln" style="top:448px">31</div><div class="cl" style="top:448px">        <span style="color:#d9f5dd">&#x27;</span><span style="color:#ecc48d">password</span><span style="color:#d9f5dd">&#x27;</span>     <span style="color:#7fdbca">=&gt;</span> <span style="color:#d9f5dd">&#x27;</span><span style="color:#ecc48d"></span><span style="color:#d9f5dd">&#x27;</span><span style="color:#d6deeb">,</span></div>
<div class="ln" style="top:467px">32</div><div class="cl" style="top:467px">        <span style="color:#d9f5dd">&#x27;</span><span style="color:#ecc48d">database</span><span style="color:#d9f5dd">&#x27;</span>     <span style="color:#7fdbca">=&gt;</span> <span style="color:#d9f5dd">&#x27;</span><span style="color:#ecc48d">web2go</span><span style="color:#d9f5dd">&#x27;</span><span style="color:#d6deeb">,</span></div>
<div class="ln" style="top:486px">33</div><div class="cl" style="top:486px">        <span style="color:#d9f5dd">&#x27;</span><span style="color:#ecc48d">DBDriver</span><span style="color:#d9f5dd">&#x27;</span>     <span style="color:#7fdbca">=&gt;</span> <span style="color:#d9f5dd">&#x27;</span><span style="color:#ecc48d">MySQLi</span><span style="color:#d9f5dd">&#x27;</span><span style="color:#d6deeb">,</span></div>
<div class="ln" style="top:505px">34</div><div class="cl" style="top:505px">        <span style="color:#d9f5dd">&#x27;</span><span style="color:#ecc48d">DBPrefix</span><span style="color:#d9f5dd">&#x27;</span>     <span style="color:#7fdbca">=&gt;</span> <span style="color:#d9f5dd">&#x27;</span><span style="color:#ecc48d"></span><span style="color:#d9f5dd">&#x27;</span><span style="color:#d6deeb">,</span></div>
<div class="ln" style="top:524px">35</div><div class="cl" style="top:524px">        <span style="color:#d9f5dd">&#x27;</span><span style="color:#ecc48d">pConnect</span><span style="color:#d9f5dd">&#x27;</span>     <span style="color:#7fdbca">=&gt;</span> <span style="color:#82aaff">false</span><span style="color:#d6deeb">,</span></div>
<div class="ln" style="top:543px">36</div><div class="cl" style="top:543px">        <span style="color:#d9f5dd">&#x27;</span><span style="color:#ecc48d">DBDebug</span><span style="color:#d9f5dd">&#x27;</span>      <span style="color:#7fdbca">=&gt;</span> <span style="color:#82aaff">true</span><span style="color:#d6deeb">,</span></div>
<div class="ln" style="top:562px">37</div><div class="cl" style="top:562px">        <span style="color:#d9f5dd">&#x27;</span><span style="color:#ecc48d">charset</span><span style="color:#d9f5dd">&#x27;</span>      <span style="color:#7fdbca">=&gt;</span> <span style="color:#d9f5dd">&#x27;</span><span style="color:#ecc48d">utf8mb4</span><span style="color:#d9f5dd">&#x27;</span><span style="color:#d6deeb">,</span></div>
<div class="ln" style="top:581px">38</div><div class="cl" style="top:581px">        <span style="color:#d9f5dd">&#x27;</span><span style="color:#ecc48d">DBCollat</span><span style="color:#d9f5dd">&#x27;</span>     <span style="color:#7fdbca">=&gt;</span> <span style="color:#d9f5dd">&#x27;</span><span style="color:#ecc48d">utf8mb4_general_ci</span><span style="color:#d9f5dd">&#x27;</span><span style="color:#d6deeb">,</span></div>
<div class="ln" style="top:600px">39</div><div class="cl" style="top:600px">        <span style="color:#d9f5dd">&#x27;</span><span style="color:#ecc48d">swapPre</span><span style="color:#d9f5dd">&#x27;</span>      <span style="color:#7fdbca">=&gt;</span> <span style="color:#d9f5dd">&#x27;</span><span style="color:#ecc48d"></span><span style="color:#d9f5dd">&#x27;</span><span style="color:#d6deeb">,</span></div>
<div class="ln" style="top:619px">40</div><div class="cl" style="top:619px">        <span style="color:#d9f5dd">&#x27;</span><span style="color:#ecc48d">encrypt</span><span style="color:#d9f5dd">&#x27;</span>      <span style="color:#7fdbca">=&gt;</span> <span style="color:#82aaff">false</span><span style="color:#d6deeb">,</span></div>
<div class="ln" style="top:638px">41</div><div class="cl" style="top:638px">        <span style="color:#d9f5dd">&#x27;</span><span style="color:#ecc48d">compress</span><span style="color:#d9f5dd">&#x27;</span>     <span style="color:#7fdbca">=&gt;</span> <span style="color:#82aaff">false</span><span style="color:#d6deeb">,</span></div>
<div class="ln" style="top:657px">42</div><div class="cl" style="top:657px">        <span style="color:#d9f5dd">&#x27;</span><span style="color:#ecc48d">strictOn</span><span style="color:#d9f5dd">&#x27;</span>     <span style="color:#7fdbca">=&gt;</span> <span style="color:#82aaff">false</span><span style="color:#d6deeb">,</span></div>
<div class="ln" style="top:674.5px">43</div><div class="cl" style="top:674.5px">        <span style="color:#d9f5dd">&#x27;</span><span style="color:#ecc48d">failover</span><span style="color:#d9f5dd">&#x27;</span>     <span style="color:#7fdbca">=&gt;</span> <span style="color:#179fff">[]</span><span style="color:#d6deeb">,</span></div>
</div>
<div id="eds"></div>
<svg width="1465" height="772" viewBox="0 0 1465 772" style="left:0;top:0" fill="none"><path d="M719.8,547.5 L867.6,516.6 V531.5 H1015.5 V562.4 H867.6 V578.3 Z" stroke="#ed1c24" stroke-width="4.8" stroke-linejoin="round" shape-rendering="crispEdges"/></svg>
</body>
</html>
